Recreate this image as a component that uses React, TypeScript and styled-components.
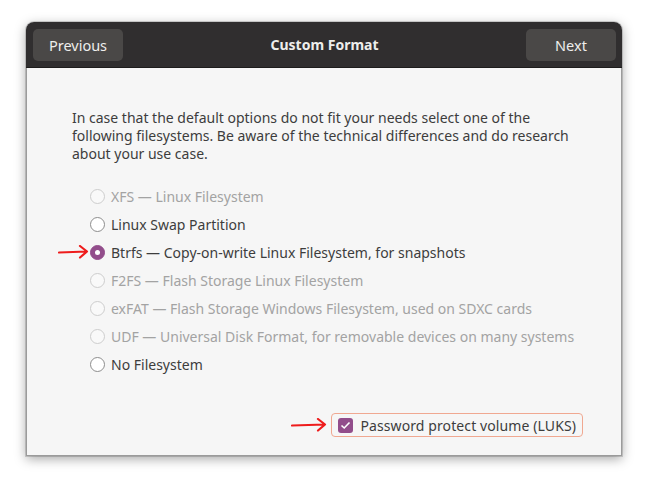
import React, { useState } from 'react';
import styled, { createGlobalStyle } from 'styled-components';

const GlobalStyle = createGlobalStyle`
  html, body {
    margin: 0;
    background: #ffffff;
  }
  body {
    font-family: 'Noto Sans', 'Open Sans', sans-serif;
  }
`;

const Page = styled.div`
  padding: 22px 26px;
  width: 648px;
  height: 485px;
  box-sizing: border-box;
`;

const Window = styled.div`
  width: 596px;
  height: 434px;
  display: flex;
  flex-direction: column;
  border-radius: 8px 8px 0 0;
  box-shadow: 0 3px 12px rgba(0, 0, 0, 0.35), 0 0 0 1px rgba(0, 0, 0, 0.15);
  overflow: hidden;
`;

const HeaderBar = styled.div`
  height: 46px;
  flex-shrink: 0;
  box-sizing: border-box;
  background: #302e2f;
  border-bottom: 1px solid #1d1c1c;
  display: flex;
  align-items: center;
  justify-content: space-between;
  padding: 0 6px 0 7px;
`;

const HeaderButton = styled.button`
  width: 90px;
  height: 32px;
  border: none;
  border-radius: 5px;
  background: #4a4847;
  color: #eeeeec;
  font-family: inherit;
  font-size: 14.5px;
  padding: 0;
`;

const Title = styled.div`
  color: #eeeeec;
  font-weight: bold;
  font-size: 14px;
`;

const Body = styled.div`
  flex-grow: 1;
  background: #f6f6f6;
  border: 1px solid #9b9b9b;
  border-top: none;
  display: flex;
  flex-direction: column;
  padding: 41px 38px 18px 45px;
`;

const Intro = styled.p`
  margin: 0 0 19px;
  font-size: 14px;
  line-height: 18px;
  color: #3d3d3d;
`;

const OptionList = styled.div`
  display: flex;
  flex-direction: column;
  padding-left: 18px;
`;

const OptionRow = styled.label<{ $disabled?: boolean }>`
  position: relative;
  height: 28px;
  display: flex;
  align-items: center;
  gap: 6px;
  font-size: 14px;
  white-space: nowrap;
  color: ${({ $disabled }) => ($disabled ? '#a3a3a3' : '#3d3d3d')};
`;

const Radio = styled.span<{ $checked?: boolean; $disabled?: boolean }>`
  width: 15px;
  height: 15px;
  box-sizing: border-box;
  border-radius: 50%;
  flex-shrink: 0;
  display: flex;
  align-items: center;
  justify-content: center;
  background: ${({ $checked, $disabled }) =>
    $checked ? '#924d8b' : $disabled ? '#f9f9f9' : '#ffffff'};
  border: 1px solid
    ${({ $checked, $disabled }) =>
      $checked ? '#924d8b' : $disabled ? '#cdcdcd' : '#8d8d8d'};
  &::after {
    content: '';
    display: ${({ $checked }) => ($checked ? 'block' : 'none')};
    width: 5px;
    height: 5px;
    border-radius: 50%;
    background: #ffffff;
  }
`;

const Arrow = styled.svg<{ $left: number }>`
  position: absolute;
  left: ${({ $left }) => $left}px;
  top: 50%;
  transform: translateY(-50%);
`;

const Spacer = styled.div`
  flex-grow: 1;
`;

const Footer = styled.div`
  display: flex;
  justify-content: flex-end;
`;

const LuksToggle = styled.label`
  position: relative;
  height: 24px;
  box-sizing: border-box;
  display: flex;
  align-items: center;
  gap: 7px;
  padding: 0 6px;
  border: 1px solid #f0a891;
  border-radius: 4px;
  font-size: 14px;
  letter-spacing: 0.1px;
  white-space: nowrap;
  color: #3d3d3d;
`;

const CheckBox = styled.span`
  width: 15px;
  height: 15px;
  border-radius: 3px;
  background: #924d8b;
  display: flex;
  align-items: center;
  justify-content: center;
`;

type Option = { label: string; disabled?: boolean };

const options: Option[] = [
  { label: 'XFS — Linux Filesystem', disabled: true },
  { label: 'Linux Swap Partition' },
  { label: 'Btrfs — Copy-on-write Linux Filesystem, for snapshots' },
  { label: 'F2FS — Flash Storage Linux Filesystem', disabled: true },
  { label: 'exFAT — Flash Storage Windows Filesystem, used on SDXC cards', disabled: true },
  { label: 'UDF — Universal Disk Format, for removable devices on many systems', disabled: true },
  { label: 'No Filesystem' },
];

const RedArrow = ({ left, width }: { left: number; width: number }) => (
  <Arrow $left={left} width={width} height="14" viewBox={`0 0 ${width} 14`}>
    <path
      d={`M1 7.5 L${width - 2} 6.5 M${width - 9} 1 L${width - 2} 6.5 L${width - 9} 12.5`}
      stroke="#ee1c1c"
      strokeWidth="2.2"
      fill="none"
      strokeLinecap="round"
      strokeLinejoin="round"
    />
  </Arrow>
);

const App = () => {
  const [selected] = useState(2);
  return (
    <Page>
      <GlobalStyle />
      <Window>
        <HeaderBar>
          <HeaderButton>Previous</HeaderButton>
          <Title>Custom Format</Title>
          <HeaderButton>Next</HeaderButton>
        </HeaderBar>
        <Body>
          <Intro>
            In case that the default options do not fit your needs select one of the
            following filesystems. Be aware of the technical differences and do research
            about your use case.
          </Intro>
          <OptionList>
            {options.map((opt, idx) => (
              <OptionRow key={opt.label} $disabled={opt.disabled}>
                {idx === selected && <RedArrow left={-32} width={31} />}
                <Radio $checked={idx === selected} $disabled={opt.disabled} />
                {opt.label}
              </OptionRow>
            ))}
          </OptionList>
          <Spacer />
          <Footer>
            <LuksToggle>
              <RedArrow left={-41} width={36} />
              <CheckBox>
                <svg width="11" height="9" viewBox="0 0 11 9">
                  <path d="M1.5 4.5 L4.2 7 L9.5 1.5" stroke="#fff" strokeWidth="1.6" fill="none" />
                </svg>
              </CheckBox>
              Password protect volume (LUKS)
            </LuksToggle>
          </Footer>
        </Body>
      </Window>
    </Page>
  );
};

export default App;
